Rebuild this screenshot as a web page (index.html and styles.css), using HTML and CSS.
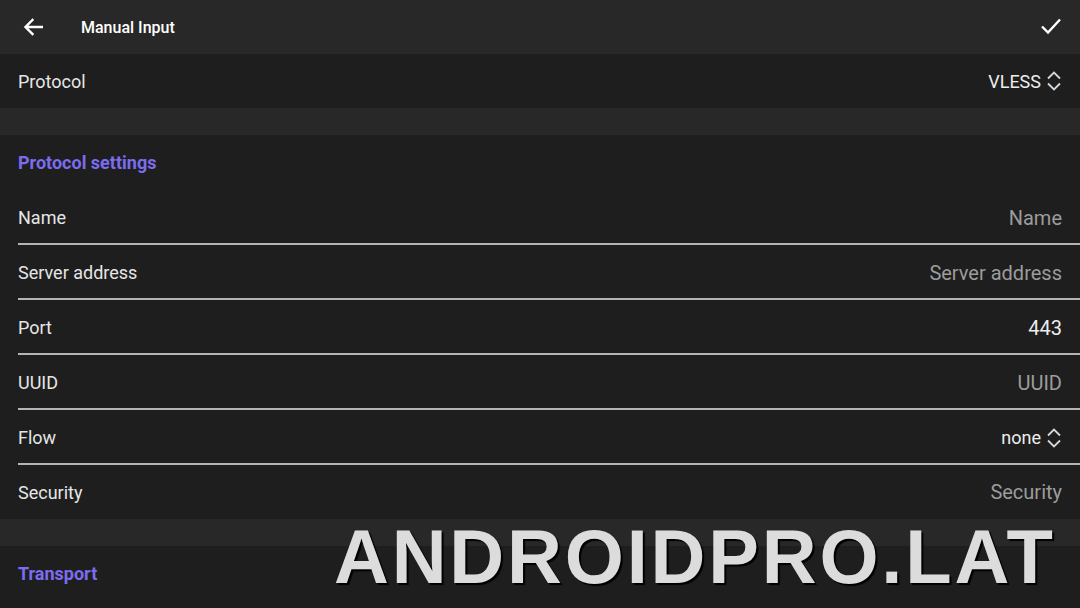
FILE: index.html
```html
<!DOCTYPE html>
<html lang="en">
  <head>
    <meta charset="UTF-8" />
    <meta name="viewport" content="width=device-width, initial-scale=1.0" />
    <title>Manual Input</title>
    <link rel="stylesheet" href="styles.css">
  </head>
  <body>
    <div class="toolbar">
      <svg class="icon back" width="20" height="18" viewBox="0 0 20 18">
        <path d="M19 9H3M9.5 2L2.5 9l7 7" fill="none" stroke="#fff" stroke-width="2.4" stroke-linecap="square"/>
      </svg>
      <h1>Manual Input</h1>
      <svg class="icon done" width="22" height="18" viewBox="0 0 22 18">
        <path d="M2 9.5l6 6L20 2.5" fill="none" stroke="#fff" stroke-width="2.4"/>
      </svg>
    </div>

    <div class="row">
      <span class="label">Protocol</span>
      <span class="value select">VLESS
        <svg width="16" height="20" viewBox="0 0 16 20"><path d="M2 7.5l6-6 6 6M2 12.5l6 6 6-6" fill="none" stroke="#d8d8d8" stroke-width="1.8"/></svg>
      </span>
    </div>

    <div class="gap"></div>

    <div class="section">Protocol settings</div>
    <div class="row field">
      <span class="label">Name</span>
      <span class="value hint">Name</span>
    </div>
    <div class="row field">
      <span class="label">Server address</span>
      <span class="value hint">Server address</span>
    </div>
    <div class="row field">
      <span class="label">Port</span>
      <span class="value input">443</span>
    </div>
    <div class="row field">
      <span class="label">UUID</span>
      <span class="value hint">UUID</span>
    </div>
    <div class="row field">
      <span class="label">Flow</span>
      <span class="value select">none
        <svg width="16" height="20" viewBox="0 0 16 20"><path d="M2 7.5l6-6 6 6M2 12.5l6 6 6-6" fill="none" stroke="#d8d8d8" stroke-width="1.8"/></svg>
      </span>
    </div>
    <div class="row">
      <span class="label">Security</span>
      <span class="value hint">Security</span>
    </div>

    <div class="gap"></div>

    <div class="section">Transport</div>

    <div class="watermark">ANDROIDPRO.LAT</div>
  </body>
</html>
```

FILE: styles.css
```css
body {
  font-family: Roboto, "Liberation Sans", sans-serif;
  background-color: #1e1e1e;
  color: #e8e8e8;
  margin: 0;
  width: 1080px;
  height: 608px;
  overflow: hidden;
  position: relative;
}

.toolbar {
  height: 54px;
  background-color: #282828;
  display: flex;
  align-items: center;
  padding: 0 18px 0 23px;
}

.toolbar h1 {
  font-size: 16px;
  font-weight: 500;
  color: #fff;
  margin: 0 0 0 38px;
  flex: 1;
}

.icon.back {
  margin-top: -1px;
}

.icon.done {
  margin-top: -2px;
}

.row {
  height: 54px;
  display: flex;
  align-items: center;
  justify-content: space-between;
  padding: 0 18px;
  font-size: 18px;
}

.row.field {
  height: 55px;
  box-sizing: border-box;
  border-bottom: 2px solid #b4b4b4;
  margin-left: 18px;
  padding-left: 0;
  padding-top: 2px;
}

.label {
  color: #e6e6e6;
}

.value {
  color: #ededed;
}

.value.hint,
.value.input {
  font-size: 20px;
}

.value.hint {
  color: #9c9c9c;
}

.value.select {
  display: flex;
  align-items: center;
  gap: 5px;
}

.gap {
  height: 27px;
  background-color: #282828;
}

.section {
  height: 55px;
  display: flex;
  align-items: center;
  padding: 0 18px;
  font-size: 18px;
  font-weight: 700;
  color: #7b6cf0;
}

.watermark {
  position: absolute;
  left: 334px;
  top: 513px;
  font-family: "Liberation Sans", Arial, sans-serif;
  font-weight: 700;
  font-size: 76px;
  letter-spacing: 2.8px;
  color: #dcdcdc;
  text-shadow: 2px 2px 1px #000;
}
```
